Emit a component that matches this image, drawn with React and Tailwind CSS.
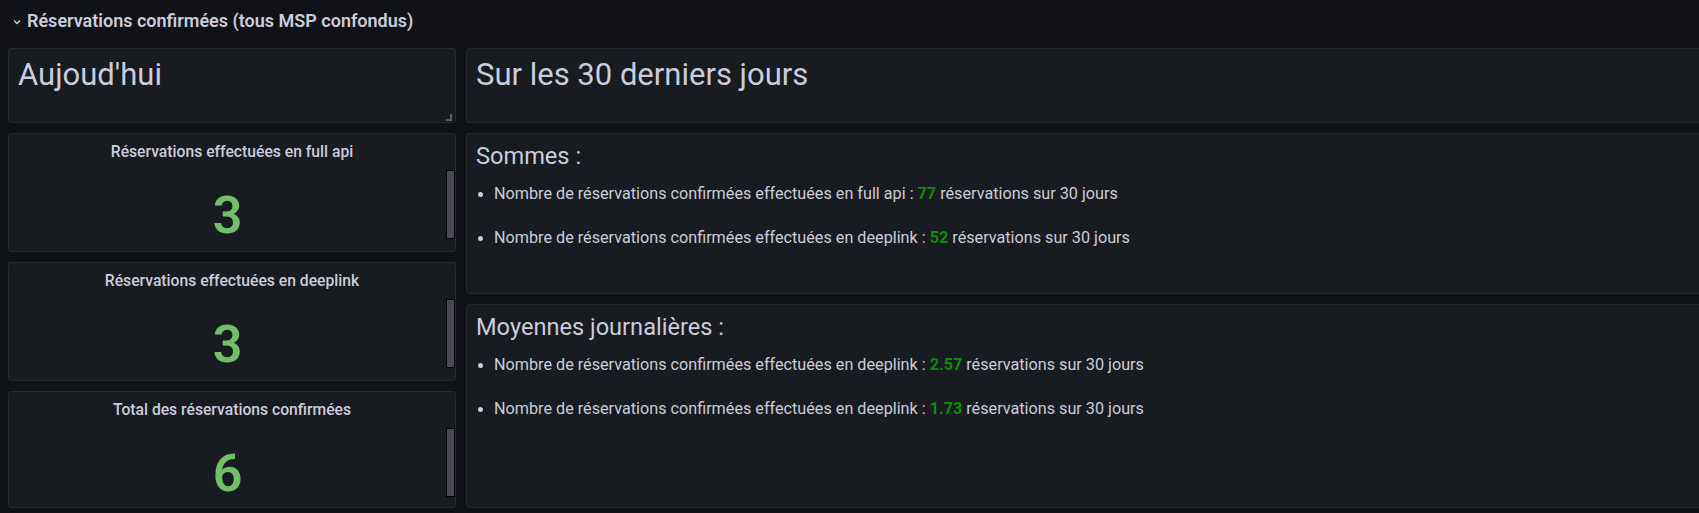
import React from 'react';

const panel = 'relative rounded-[3px] border border-[#26282d] bg-[#181b1f]';

const stats = [
  { title: 'Réservations effectuées en full api', value: '3', h: 'h-[119px]' },
  { title: 'Réservations effectuées en deeplink', value: '3', h: 'h-[119px]' },
  { title: 'Total des réservations confirmées', value: '6', h: 'h-[117px]' },
];

const sums = [
  { label: 'Nombre de réservations confirmées effectuées en full api :', value: '77' },
  { label: 'Nombre de réservations confirmées effectuées en deeplink :', value: '52' },
];

const averages = [
  { label: 'Nombre de réservations confirmées effectuées en deeplink :', value: '2.57' },
  { label: 'Nombre de réservations confirmées effectuées en deeplink :', value: '1.73' },
];

const StatPanel = ({ title, value, h }) => (
  <div className={`${panel} ${h}`}>
    <div className="pt-[9px] text-center text-[15.7px] leading-[18px] font-medium text-[#ccccdc]">{title}</div>
    <div className="mt-[29px] pr-[9px] text-center text-[52px] leading-[52px] font-semibold text-[#73bf69]">{value}</div>
    {/* petite barre de défilement du panneau */}
    <div className="absolute right-0 top-[36px] h-[69px] w-[9px] border border-black bg-[#484955]" />
  </div>
);

const ListPanel = ({ title, items, h }) => (
  <div className={`${panel} ${h} px-[9px] pt-[8px]`}>
    <h2 className="text-[23.6px] leading-[28px] font-normal text-[#ccccdc]">{title}</h2>
    <ul className="mt-[12px] flex flex-col gap-[20px]">
      {items.map((it, i) => (
        <li key={i} className="flex items-center text-[16.2px] leading-[24px] text-[#ccccdc]">
          <span className="ml-[2px] mr-[11px] h-[5px] w-[5px] rounded-full bg-[#ccccdc]" />
          <span>
            {it.label} <b className="font-bold text-[#0e8c0e]">{it.value}</b> réservations sur 30 jours
          </span>
        </li>
      ))}
    </ul>
  </div>
);

export default function App() {
  return (
    <div className="h-[513px] w-full overflow-hidden bg-[#111217] font-['Roboto','Liberation_Sans',sans-serif]">
      {/* EN-TÊTE DE LIGNE */}
      <div className="flex h-[41px] items-center pl-[13px] text-[#ccccdc]">
        <svg width="8" height="6" viewBox="0 0 8 6" className="mr-[6px] mt-[3px]">
          <path d="M1 1.5 L4 4.5 L7 1.5" fill="none" stroke="#ccccdc" strokeWidth="1.3" />
        </svg>
        <span className="text-[18px] leading-[22px] font-semibold">Réservations confirmées (tous MSP confondus)</span>
      </div>

      <div className="mt-[7px] flex gap-[10px] pl-[8px]">
        {/* COLONNE GAUCHE */}
        <div className="flex w-[448px] shrink-0 flex-col gap-[10px]">
          <div className={`${panel} h-[75px] px-[9px] pt-[9px]`}>
            <h1 className="text-[31px] leading-[34px] font-normal text-[#ccccdc]">Aujoud'hui</h1>
            <span className="absolute bottom-[1px] right-[3px] h-[7px] w-[6px] border-b-2 border-r-2 border-[#5d5e66]" />
          </div>
          {stats.map((s) => (
            <StatPanel key={s.title} {...s} />
          ))}
        </div>

        {/* COLONNE DROITE */}
        <div className="flex w-[1400px] shrink-0 flex-col gap-[10px]">
          <div className={`${panel} h-[75px] px-[9px] pt-[9px]`}>
            <h1 className="text-[31px] leading-[34px] font-normal text-[#ccccdc]">Sur les 30 derniers jours</h1>
          </div>
          <ListPanel title="Sommes :" items={sums} h="h-[161px]" />
          <ListPanel title="Moyennes journalières :" items={averages} h="h-[204px]" />
        </div>
      </div>
    </div>
  );
}
